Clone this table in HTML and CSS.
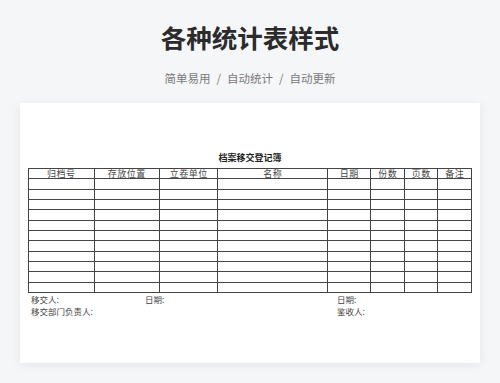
FILE: index.html
```html
<!DOCTYPE html>
<html lang="zh">
<head>
<meta charset="utf-8">
<link rel="stylesheet" href="styles.css">
</head>
<body>
<h1 class="title">各种统计表样式</h1>
<p class="subtitle">简单易用<span class="sep">/</span>自动统计<span class="sep">/</span>自动更新</p>
<div class="card">
  <div class="doc-title">档案移交登记簿</div>
  <table class="sheet">
    <colgroup>
      <col style="width:65.7px"><col style="width:65.3px"><col style="width:58.4px"><col style="width:110px">
      <col style="width:43px"><col style="width:33.6px"><col style="width:33.4px"><col style="width:34px">
    </colgroup>
    <thead>
      <tr><th>归档号</th><th>存放位置</th><th>立卷单位</th><th>名称</th><th>日期</th><th>份数</th><th>页数</th><th>备注</th></tr>
    </thead>
    <tbody>
      <tr><td></td><td></td><td></td><td></td><td></td><td></td><td></td><td></td></tr>
      <tr><td></td><td></td><td></td><td></td><td></td><td></td><td></td><td></td></tr>
      <tr><td></td><td></td><td></td><td></td><td></td><td></td><td></td><td></td></tr>
      <tr><td></td><td></td><td></td><td></td><td></td><td></td><td></td><td></td></tr>
      <tr><td></td><td></td><td></td><td></td><td></td><td></td><td></td><td></td></tr>
      <tr><td></td><td></td><td></td><td></td><td></td><td></td><td></td><td></td></tr>
      <tr><td></td><td></td><td></td><td></td><td></td><td></td><td></td><td></td></tr>
      <tr><td></td><td></td><td></td><td></td><td></td><td></td><td></td><td></td></tr>
      <tr><td></td><td></td><td></td><td></td><td></td><td></td><td></td><td></td></tr>
      <tr><td></td><td></td><td></td><td></td><td></td><td></td><td></td><td></td></tr>
      <tr><td></td><td></td><td></td><td></td><td></td><td></td><td></td><td></td></tr>
    </tbody>
  </table>
  <div class="foot">
    <span>移交人:</span><span>日期:</span><span>日期:</span>
    <span>移交部门负责人:</span><span></span><span>鉴收人:</span>
  </div>
</div>
</body>
</html>
```
FILE: styles.css
```css
html, body {
  margin: 0;
  padding: 0;
}
body {
  background: #f5f6f8;
  width: 500px;
  height: 383px;
  overflow: hidden;
  font-family: "Noto Sans CJK SC", "Noto Sans", sans-serif;
}
.title {
  margin: 22px 0 0;
  font-size: 25.5px;
  line-height: 30px;
  font-weight: 700;
  color: #2b2b2b;
  text-align: center;
}
.subtitle {
  margin: 16px 0 0;
  font-size: 11.5px;
  line-height: 20px;
  color: #7a7a7a;
  text-align: center;
}
.sep {
  margin: 0 6px;
}
.card {
  margin: 15px 20px 0;
  height: 260px;
  background: #fff;
  box-shadow: 0 2px 10px rgba(0, 0, 0, 0.07);
  padding: 49px 0 0 8px;
  box-sizing: border-box;
}
.doc-title {
  width: 444px;
  text-align: center;
  font-size: 9px;
  line-height: 12px;
  font-weight: 700;
  color: #222;
}
.sheet {
  margin-top: 4px;
  width: 444px;
  height: 125px;
  table-layout: fixed;
  border-collapse: collapse;
}
.sheet th, .sheet td {
  border: 1px solid #444;
  padding: 0;
  height: 9.3px;
}
.sheet th {
  font-size: 9px;
  line-height: 9px;
  font-weight: 400;
  color: #444;
  letter-spacing: 0.5px;
  text-align: center;
}
.foot {
  display: grid;
  grid-template-columns: 114px 192px auto;
  padding-left: 3px;
  font-size: 8.5px;
  line-height: 12px;
  color: #444;
}
```
